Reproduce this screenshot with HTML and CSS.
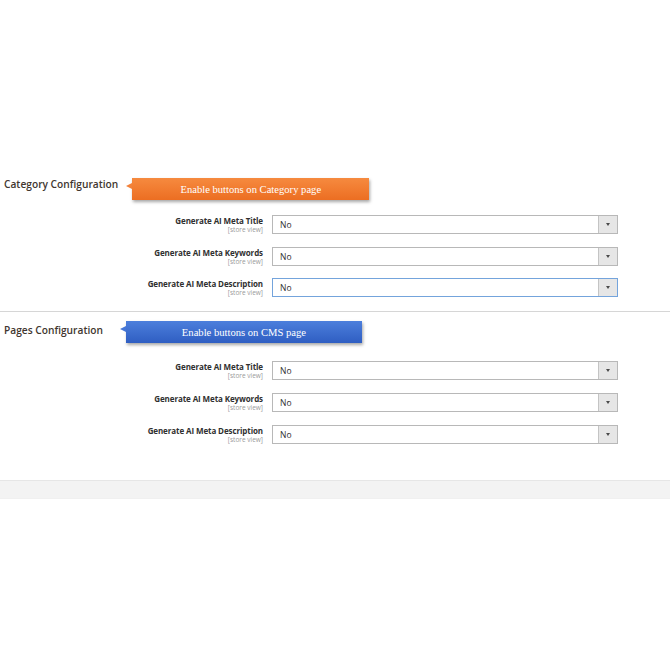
FILE: index.html
```html
<!DOCTYPE html>
<html>
<head>
<meta charset="utf-8">
<link rel="stylesheet" href="styles.css">
</head>
<body>
<div class="page">
  <section class="group first">
    <div class="group-head">
      <h2 class="group-title">Category Configuration</h2>
      <div class="callout orange">Enable buttons on Category page</div>
    </div>
    <div class="fields">
      <div class="field">
        <div class="label"><span class="name">Generate AI Meta Title</span><span class="scope">[store view]</span></div>
        <div class="select"><span class="value">No</span><span class="btn"><span class="arrow"></span></span></div>
      </div>
      <div class="field">
        <div class="label"><span class="name">Generate AI Meta Keywords</span><span class="scope">[store view]</span></div>
        <div class="select"><span class="value">No</span><span class="btn"><span class="arrow"></span></span></div>
      </div>
      <div class="field">
        <div class="label"><span class="name">Generate AI Meta Description</span><span class="scope">[store view]</span></div>
        <div class="select focus"><span class="value">No</span><span class="btn"><span class="arrow"></span></span></div>
      </div>
    </div>
  </section>
  <section class="group second">
    <div class="group-head">
      <h2 class="group-title">Pages Configuration</h2>
      <div class="callout blue">Enable buttons on CMS page</div>
    </div>
    <div class="fields">
      <div class="field">
        <div class="label"><span class="name">Generate AI Meta Title</span><span class="scope">[store view]</span></div>
        <div class="select"><span class="value">No</span><span class="btn"><span class="arrow"></span></span></div>
      </div>
      <div class="field">
        <div class="label"><span class="name">Generate AI Meta Keywords</span><span class="scope">[store view]</span></div>
        <div class="select"><span class="value">No</span><span class="btn"><span class="arrow"></span></span></div>
      </div>
      <div class="field">
        <div class="label"><span class="name">Generate AI Meta Description</span><span class="scope">[store view]</span></div>
        <div class="select"><span class="value">No</span><span class="btn"><span class="arrow"></span></span></div>
      </div>
    </div>
  </section>
  <div class="footer-band"></div>
</div>
</body>
</html>
```
FILE: styles.css
```css
* { box-sizing: border-box; }
html, body { margin: 0; padding: 0; background: #fff; }
body { font-family: "Open Sans", "Liberation Sans", sans-serif; color: #303030; }
.page { width: 670px; height: 670px; padding-top: 178px; }
.group { padding-left: 4px; }
.group.first { padding-bottom: 14px; border-bottom: 1px solid #d6d6d6; }
.group.second { padding-top: 9px; }
.group-head { display: flex; align-items: center; height: 22px; }
.group-title { margin: 0; font-size: 10.2px; font-weight: 600; color: #41362f; white-space: nowrap; line-height: 13px; margin-top: -10px; }
.second .group-title { margin-top: -3px; }
.callout { position: relative; height: 22px; color: #fff; font-family: "Liberation Serif", "Times New Roman", serif; font-size: 10.6px; display: flex; align-items: center; justify-content: center; box-shadow: 1px 2px 3px rgba(0,0,0,0.35); }
.callout::before { content: ""; position: absolute; left: -6px; top: 5px; border-style: solid; border-width: 3px 6px 3px 0; border-color: transparent; }
.orange { margin-left: 14px; width: 237px; background: linear-gradient(#f68a3f, #ec6e22); }
.orange::before { border-right-color: #f3823a; }
.blue { margin-left: 23px; width: 236px; background: linear-gradient(#4c7fdc, #2f5ec2); }
.blue::before { border-right-color: #4676d6; }
.fields { display: flex; flex-direction: column; gap: 12.5px; margin-top: 15px; }
.second .fields { margin-top: 18px; gap: 13px; }
.field { display: flex; align-items: flex-start; }
.label { width: 268px; padding-right: 9px; display: flex; flex-direction: column; align-items: flex-end; padding-top: 1px; }
.name { font-size: 8px; font-weight: 700; color: #303030; line-height: 10px; white-space: nowrap; letter-spacing: -0.1px; }
.scope { font-size: 6.5px; color: #9a9a9a; line-height: 8px; }
.select { width: 346px; height: 19px; border: 1px solid #b8b8b8; display: flex; align-items: stretch; background: #fff; }
.select.focus { border-color: #74a4dc; }
.value { flex: 1; font-size: 8.5px; color: #303030; padding-left: 7px; display: flex; align-items: center; }
.btn { width: 19px; background: #e6e6e6; border-left: 1px solid #c4c4c4; display: flex; align-items: center; justify-content: center; }
.arrow { width: 0; height: 0; border-style: solid; border-width: 3px 2.5px 0 2.5px; border-color: #4a4a4a transparent transparent transparent; }
.footer-band { margin-top: 36px; height: 19px; background: #f3f3f3; border-top: 1px solid #e6e6e6; border-bottom: 1px solid #f0f0f0; }
```
